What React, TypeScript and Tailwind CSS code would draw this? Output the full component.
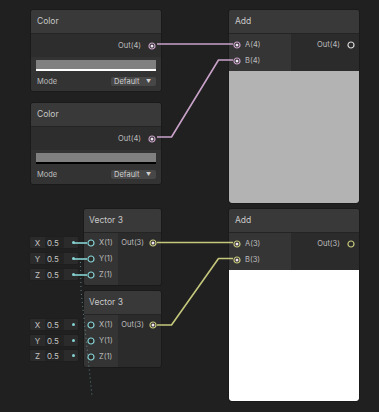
import React from "react";

const PINK = "#c9a2c9";
const YELLOW = "#c5c87c";
const CYAN = "#86d2d2";

function Port({ color, filled = true }: { color: string; filled?: boolean }) {
  return (
    <svg width="8" height="8" viewBox="0 0 8 8" className="shrink-0">
      <circle cx="4" cy="4" r="3" fill="#2a2a2a" stroke={color} strokeWidth="1.2" />
      {filled && <circle cx="4" cy="4" r="1.5" fill="#f2e6f2" />}
    </svg>
  );
}

function ColorNode({ top, alpha }: { top: number; alpha: string }) {
  return (
    <div
      className="absolute left-[30px] w-[132px] border border-[#1a1a1a] rounded-[3px] overflow-hidden"
      style={{ top }}
    >
      <div className="h-[24px] bg-[#393939] flex items-center px-[6px] text-[8.5px] text-[#c8c8c8] border-b border-[#242424]">
        Color
      </div>
      <div className="h-[23px] bg-[#2d2d2d] flex items-center justify-end gap-[7px] pr-[5px] text-[7.5px] text-[#bdbdbd]">
        <span>Out(4)</span>
        <Port color={PINK} />
      </div>
      <div className="bg-[#333333] px-[5px] pt-[3px] pb-[4px]">
        <div className="h-[11px] bg-[#808080] border-b-2" style={{ borderColor: alpha }} />
        <div className="mt-[5px] flex items-center justify-between text-[7.5px] text-[#bdbdbd]">
          <span className="pl-[1px]">Mode</span>
          <div className="w-[45px] h-[9px] bg-[#474747] rounded-[2px] flex items-center justify-between px-[3px] text-[7.5px] text-[#d0d0d0]">
            <span>Default</span>
            <span className="text-[5px] pr-[2px]">▼</span>
          </div>
        </div>
      </div>
    </div>
  );
}

function AddNode({ top, n, color, preview, previewH }: { top: number; n: number; color: string; preview: string; previewH: number }) {
  return (
    <div
      className="absolute left-[228px] w-[132px] border border-[#1a1a1a] rounded-[3px] overflow-hidden"
      style={{ top }}
    >
      <div className="h-[24px] bg-[#393939] flex items-center px-[6px] text-[8.5px] text-[#c8c8c8] border-b border-[#242424]">
        Add
      </div>
      <div className="h-[37px] flex text-[7.5px] text-[#bdbdbd]">
        <div className="w-[62px] bg-[#353535] pt-[3px] pl-[4px]">
          <div className="h-[16px] flex items-center gap-[4px]">
            <Port color={color} />
            <span>A({n})</span>
          </div>
          <div className="h-[16px] flex items-center gap-[4px]">
            <Port color={color} />
            <span>B({n})</span>
          </div>
        </div>
        <div className="flex-1 bg-[#2b2b2b] pt-[3px] pr-[4px]">
          <div className="h-[16px] flex items-center justify-end gap-[7px]">
            <span>Out({n})</span>
            <Port color={color === PINK ? "#d8d8d8" : color} filled={false} />
          </div>
        </div>
      </div>
      <div className="rounded-b-[3px]" style={{ height: previewH, background: preview }} />
    </div>
  );
}

function VectorNode({ top }: { top: number }) {
  return (
    <div
      className="absolute left-[83px] w-[79px] border border-[#1a1a1a] rounded-[3px] overflow-hidden"
      style={{ top }}
    >
      <div className="h-[24px] bg-[#393939] flex items-center px-[5px] text-[8.5px] text-[#c8c8c8] border-b border-[#242424]">
        Vector 3
      </div>
      <div className="h-[52px] flex text-[7.5px] text-[#bdbdbd]">
        <div className="w-[34px] bg-[#343434] pt-[2px] pl-[3px]">
          {["X", "Y", "Z"].map((l) => (
            <div key={l} className="h-[16px] flex items-center gap-[4px]">
              <Port color={CYAN} filled={false} />
              <span>{l}(1)</span>
            </div>
          ))}
        </div>
        <div className="flex-1 bg-[#2b2b2b] pt-[2px] pr-[4px]">
          <div className="h-[16px] flex items-center justify-end gap-[5px]">
            <span>Out(3)</span>
            <Port color={YELLOW} />
          </div>
        </div>
      </div>
    </div>
  );
}

function InputField({ top, label }: { top: number; label: string }) {
  return (
    <div
      className="absolute left-[29px] w-[50px] h-[13px] bg-[#2b2b2b] border border-[#1e1e1e] rounded-[2px] flex items-center text-[8px] text-[#c4c4c4]"
      style={{ top }}
    >
      <span className="w-[15px] text-center">{label}</span>
      <span className="w-[19px] h-[11px] bg-[#232323] rounded-[2px] flex items-center pl-[2px]">0.5</span>
      <span className="ml-[8px] w-[3px] h-[3px] rounded-full" style={{ background: CYAN }} />
    </div>
  );
}

export default function App() {
  return (
    <div
      className="relative w-[379px] h-[412px] bg-[#202020] overflow-hidden"
      style={{ fontFamily: "Inter, 'Noto Sans', sans-serif" }}
    >
      <ColorNode top={9} alpha="#ffffff" />
      <ColorNode top={102} alpha="#000000" />
      <AddNode top={9} n={4} color={PINK} preview="#b3b3b3" previewH={132} />
      <AddNode top={208} n={3} color={YELLOW} preview="#ffffff" previewH={131} />
      <VectorNode top={208} />
      <VectorNode top={290} />

      {[236, 252, 268].map((t, i) => (
        <InputField key={t} top={t} label={["X", "Y", "Z"][i]} />
      ))}
      {[318, 334, 349].map((t, i) => (
        <InputField key={t} top={t} label={["X", "Y", "Z"][i]} />
      ))}

      <svg className="absolute inset-0 pointer-events-none" width="379" height="412">
        <g fill="none" strokeWidth="1.6" strokeLinejoin="round">
          <path d="M157 44 H233" stroke={PINK} />
          <path d="M157 137 H171.5 L218.5 60 H233" stroke={PINK} />
          <path d="M157 242.5 H233" stroke={YELLOW} />
          <path d="M157 325 H171.5 L218.5 258.5 H233" stroke={YELLOW} />
          <path d="M74 243 H87" stroke={CYAN} />
          <path d="M74 259 H87" stroke={CYAN} />
          <path d="M74 275 H87" stroke={CYAN} />
          <path d="M80.5 262 L81 290 L92 396" stroke={CYAN} strokeWidth="1" strokeDasharray="1 3" opacity="0.55" />
        </g>
      </svg>
    </div>
  );
}
